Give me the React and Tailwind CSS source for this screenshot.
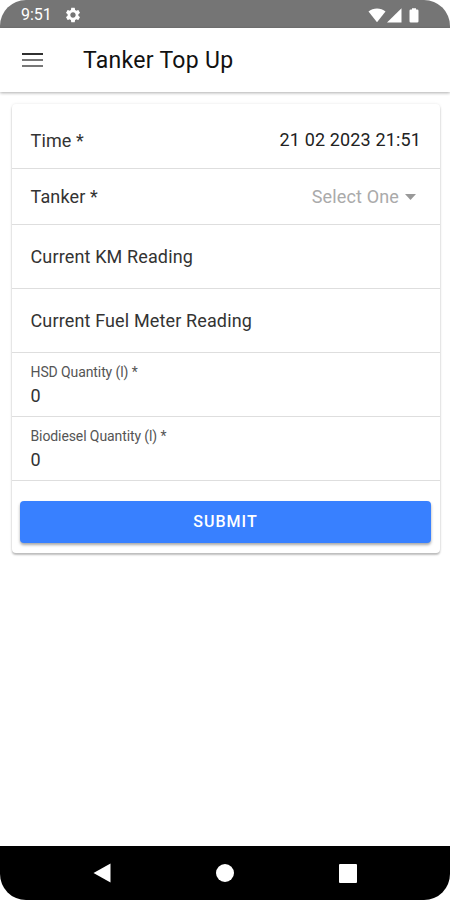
import { MdSettings } from 'react-icons/md';

const READINGS = ['Current KM Reading', 'Current Fuel Meter Reading'];

const QUANTITIES = [
  { label: 'HSD Quantity (l) *', value: '0' },
  { label: 'Biodiesel Quantity (l) *', value: '0' },
];

function StatusBar() {
  return (
    <div className="flex h-7 items-center bg-[#757575] pt-0.5 pr-[30px] pl-[21px] text-white">
      <span className="text-base leading-none">9:51</span>
      <MdSettings className="ml-[12px] size-[18px]" />
      <svg className="ml-auto h-[15px] w-[52px]" viewBox="0 0 52 15" fill="currentColor">
        {/* wifi */}
        <path d="M0.5 3.6C5 -0.6 13 -0.6 17.5 3.6L9 14.3Z" />
        {/* signal */}
        <path d="M33.5 0.3V14.5H19Z" />
        {/* battery */}
        <path d="M44 0.2H48V1.5H49.2Q50.5 1.5 50.5 2.8V13.2Q50.5 14.5 49.2 14.5H42.8Q41.5 14.5 41.5 13.2V2.8Q41.5 1.5 42.8 1.5H44Z" />
      </svg>
    </div>
  );
}

function Header() {
  return (
    <header className="flex h-16 items-center bg-white pl-[22px] shadow-[0_1px_3px_rgba(0,0,0,0.32)]">
      <button type="button" aria-label="Menu" className="flex w-[21px] flex-col gap-[4px]">
        <span className="h-[2px] bg-[#303030]" />
        <span className="h-[2px] bg-[#777777]" />
        <span className="h-[2px] bg-[#777777]" />
      </button>
      <h1 className="ml-10 pt-0.5 text-[23px] leading-7 tracking-[0.3px] text-[#111111]">Tanker Top Up</h1>
    </header>
  );
}

function TankerForm() {
  return (
    <form className="mx-3 mt-3 mr-2.5 rounded bg-white pt-2 text-lg tracking-[0.14px] text-[#333333] shadow-[0_2px_2px_rgba(0,0,0,0.24),0_0px_3px_rgba(0,0,0,0.1)]">
      {/* Time */}
      <div className="flex h-[57px] items-center justify-between border-b border-[#dedede] pr-[19px] pl-[18.5px]">
        <label className="pt-0.5">Time *</label>
        <span className="text-[#222222]">21 02 2023 21:51</span>
      </div>
      {/* Tanker */}
      <div className="flex h-14 items-center border-b border-[#dedede] pr-6 pl-[18.5px]">
        <label>Tanker *</label>
        <span className="ml-auto text-[#aaaaaa]">Select One</span>
        <svg className="ml-[6px] h-[6px] w-[11px]" viewBox="0 0 11 6" fill="#999999">
          <path d="M0 0H11L5.5 6Z" />
        </svg>
      </div>
      {/* Readings */}
      {READINGS.map((label) => (
        <div key={label} className="flex h-16 items-center border-b border-[#dedede] pl-[18.5px]">
          <label>{label}</label>
        </div>
      ))}
      {/* Quantities */}
      {QUANTITIES.map(({ label, value }) => (
        <div key={label} className="h-16 border-b border-[#dedede] pt-[10px] pl-[18.5px]">
          <label className="block text-sm leading-[18px] tracking-[-0.1px] text-[#555555]">{label}</label>
          <p className="mt-[3px] leading-6">{value}</p>
        </div>
      ))}
      <div className="pt-[20px] pr-[9px] pb-[10px] pl-2">
        <button
          type="button"
          className="h-[42px] w-full rounded bg-[#3880ff] text-base font-medium tracking-[1px] text-white shadow-[0_2px_3px_rgba(0,0,0,0.35)]"
        >
          SUBMIT
        </button>
      </div>
    </form>
  );
}

function NavBar() {
  return (
    <nav className="mt-auto flex h-[54px] items-center justify-between bg-black px-[93px]">
      <svg className="h-5 w-[18px]" viewBox="0 0 18 20" fill="#fff">
        <path d="M17.5 0.5V19.5L0.5 10Z" />
      </svg>
      <span className="size-[18px] rounded-full bg-white" />
      <span className="h-[19px] w-[18px] rounded-[1px] bg-white" />
    </nav>
  );
}

export default function App() {
  return (
    <div className="h-[900px] w-[450px] bg-white">
      <div className="flex h-full flex-col overflow-hidden rounded-[26px] bg-white font-[Roboto,sans-serif]">
        <StatusBar />
        <Header />
        <TankerForm />
        <NavBar />
      </div>
    </div>
  );
}
